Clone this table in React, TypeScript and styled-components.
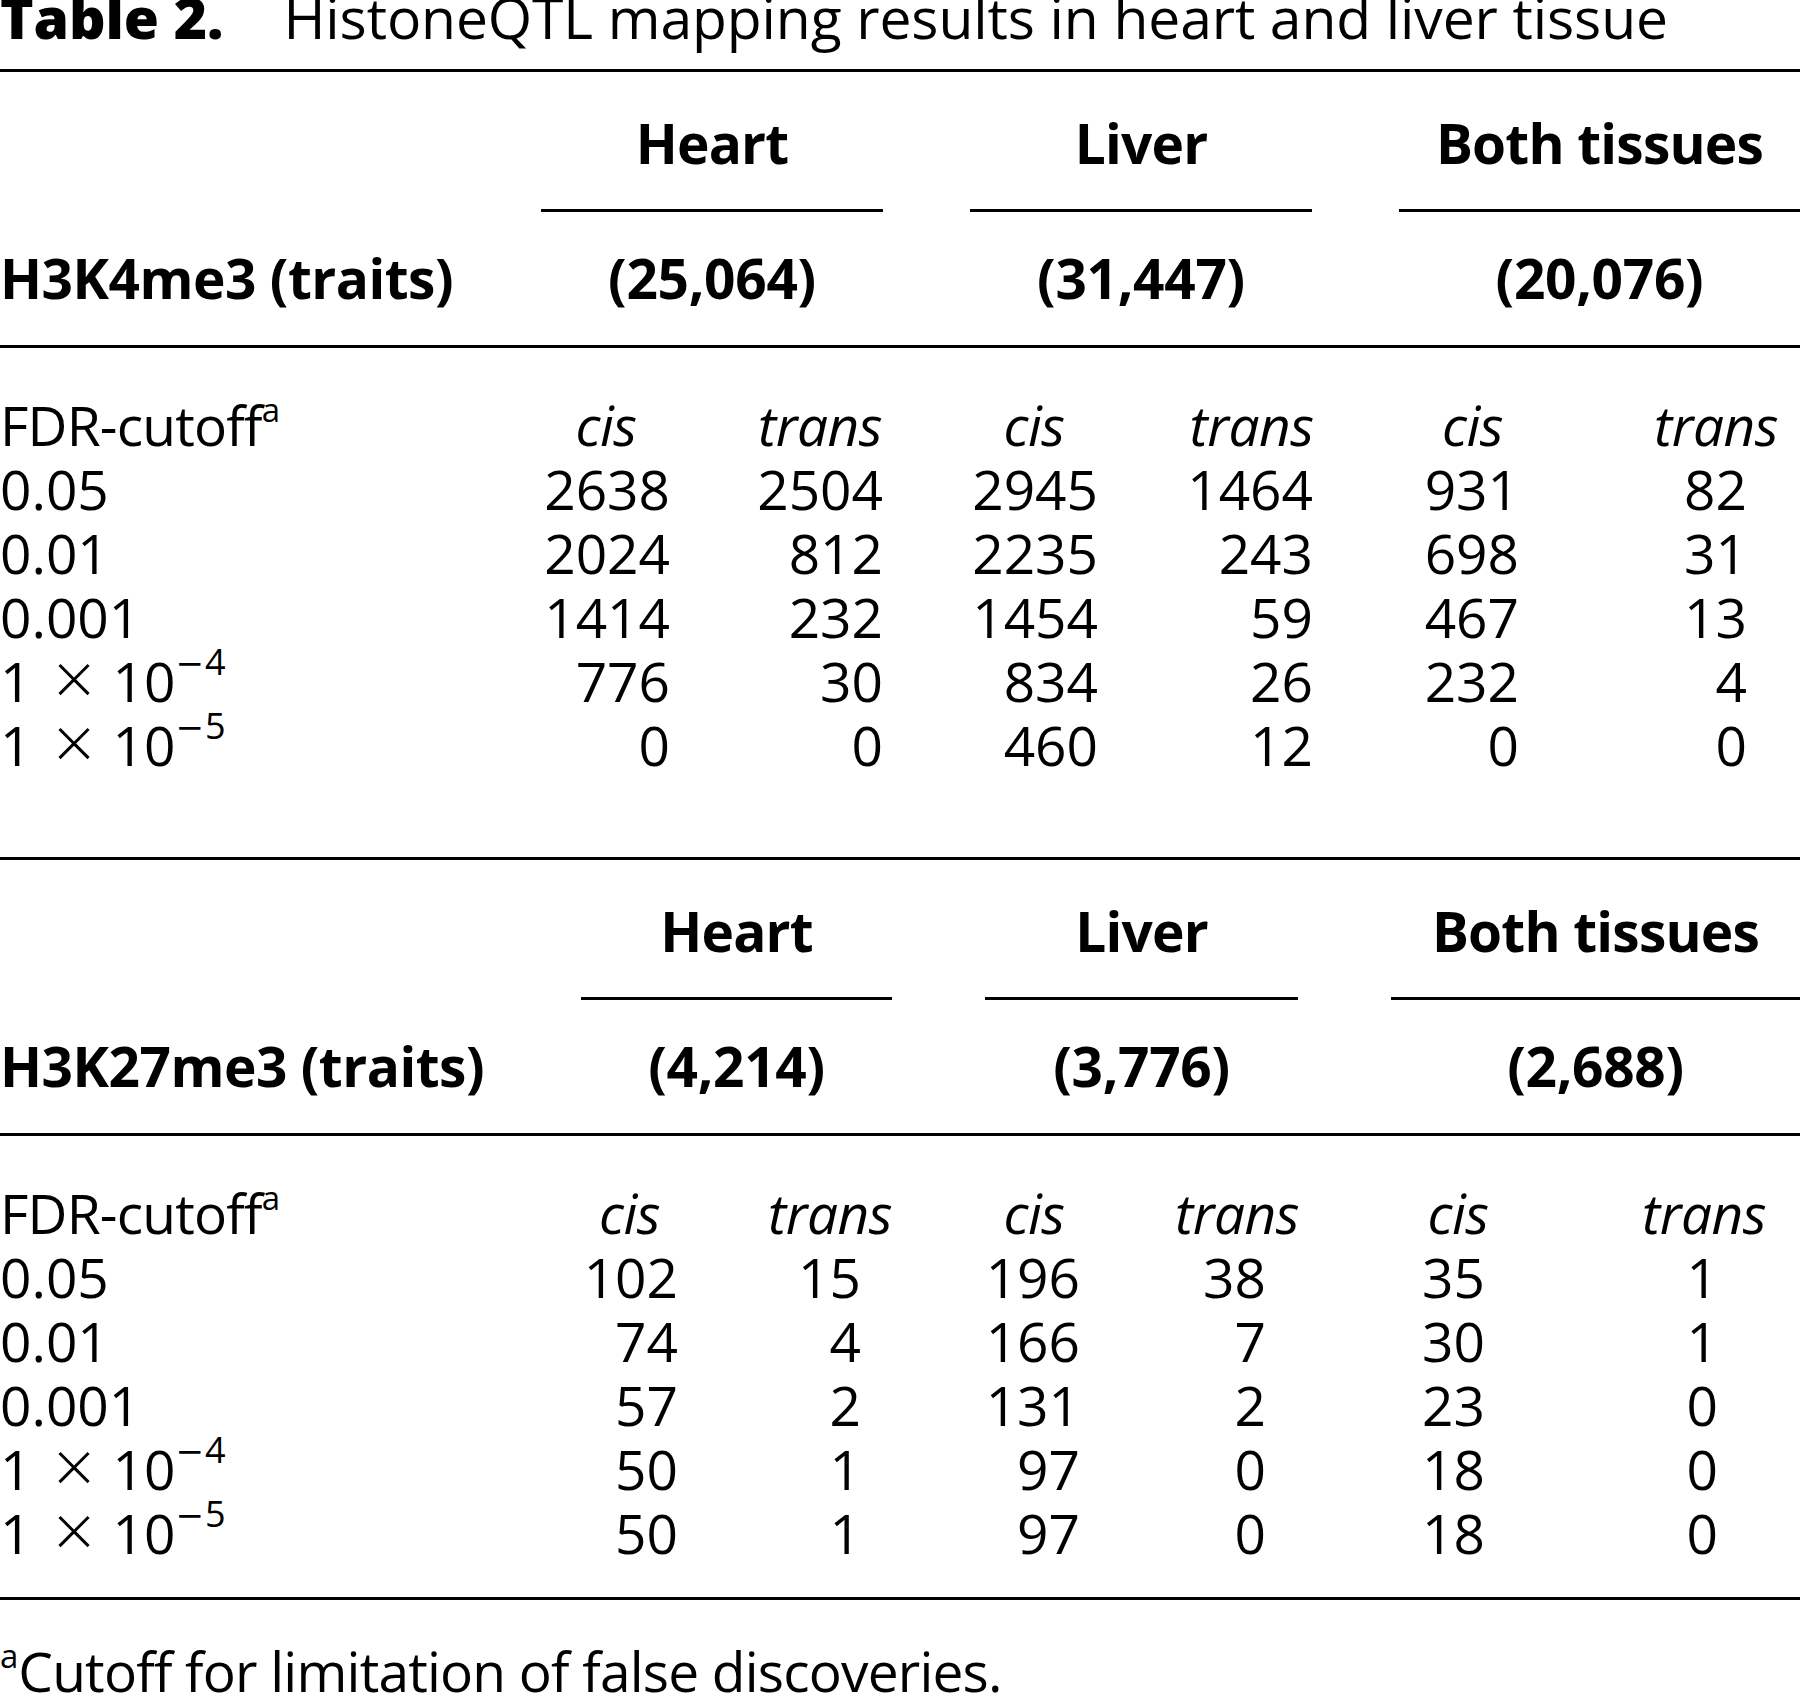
import React from 'react';
import styled, { createGlobalStyle } from 'styled-components';

const Global = createGlobalStyle`
  html, body { margin: 0; padding: 0; background: #ffffff; }
  body {
    font-family: "Open Sans", "Noto Sans", "Liberation Sans", sans-serif;
    color: #000000;
  }
`;

type Range = [number, number];

interface SpanSpec {
  title: string;
  count: string;
  range: Range;
}

interface RowSpec {
  cutoff: string;
  exp?: string;
  values: number[];
}

interface BlockSpec {
  label: string;
  spans: SpanSpec[];
  boxes: Range[];
  rows: RowSpec[];
  tail: number;
}

const RIGHT_NUDGE = 2;

const blocks: BlockSpec[] = [
  {
    label: 'H3K4me3 (traits)',
    spans: [
      { title: 'Heart', count: '(25,064)', range: [541, 883] },
      { title: 'Liver', count: '(31,447)', range: [970, 1312] },
      { title: 'Both tissues', count: '(20,076)', range: [1399, 1800] },
    ],
    boxes: [
      [542, 668],
      [757, 881],
      [970, 1096],
      [1190, 1311],
      [1426, 1517],
      [1685, 1745],
    ],
    rows: [
      { cutoff: '0.05', values: [2638, 2504, 2945, 1464, 931, 82] },
      { cutoff: '0.01', values: [2024, 812, 2235, 243, 698, 31] },
      { cutoff: '0.001', values: [1414, 232, 1454, 59, 467, 13] },
      { cutoff: '1', exp: '4', values: [776, 30, 834, 26, 232, 4] },
      { cutoff: '1', exp: '5', values: [0, 0, 460, 12, 0, 0] },
    ],
    tail: 80,
  },
  {
    label: 'H3K27me3 (traits)',
    spans: [
      { title: 'Heart', count: '(4,214)', range: [581, 892] },
      { title: 'Liver', count: '(3,776)', range: [985, 1298] },
      { title: 'Both tissues', count: '(2,688)', range: [1391, 1800] },
    ],
    boxes: [
      [581, 676],
      [799, 859],
      [988, 1078],
      [1208, 1264],
      [1431, 1483],
      [1690, 1716],
    ],
    rows: [
      { cutoff: '0.05', values: [102, 15, 196, 38, 35, 1] },
      { cutoff: '0.01', values: [74, 4, 166, 7, 30, 1] },
      { cutoff: '0.001', values: [57, 2, 131, 2, 23, 0] },
      { cutoff: '1', exp: '4', values: [50, 1, 97, 0, 18, 0] },
      { cutoff: '1', exp: '5', values: [50, 1, 97, 0, 18, 0] },
    ],
    tail: 32,
  },
];

const spanTemplate = (spans: SpanSpec[]) => {
  const parts: string[] = [];
  let cursor = 0;
  spans.forEach((s) => {
    parts.push(`${s.range[0] - cursor}px`);
    parts.push(`${s.range[1] - s.range[0]}px`);
    cursor = s.range[1];
  });
  return parts.join(' ');
};

const dataTemplate = (boxes: Range[]) => {
  const parts: string[] = [];
  let cursor = 0;
  boxes.forEach((b) => {
    parts.push(`${b[0] - cursor}px`);
    parts.push(`${b[1] + RIGHT_NUDGE - b[0]}px`);
    cursor = b[1] + RIGHT_NUDGE;
  });
  parts.push('1fr');
  return parts.join(' ');
};

const Page = styled.div`
  width: 1800px;
  height: 1693px;
  overflow: hidden;
  font-size: 55px;
`;

const Title = styled.h1`
  margin: 0;
  height: 34px;
  font-size: 57px;
  font-weight: 400;
  line-height: 34px;
  white-space: nowrap;
  letter-spacing: -0.1px;
`;

const TitleLabel = styled.span`
  display: inline-block;
  font-weight: 800;
  margin-right: 60px;
`;

const Rule = styled.div<{ $top: number }>`
  height: 3px;
  margin-top: ${(p) => p.$top}px;
  background: #000000;
`;

const SpanGrid = styled.div<{ $template: string; $top: number }>`
  display: grid;
  grid-template-columns: ${(p) => p.$template};
  margin-top: ${(p) => p.$top}px;
  line-height: 64px;
  white-space: nowrap;
`;

const Spanner = styled.div<{ $col: number }>`
  grid-column: ${(p) => p.$col};
  display: flex;
  justify-content: center;
  font-weight: 700;
  letter-spacing: -0.8px;
  padding-bottom: 34px;
  border-bottom: 3px solid #000000;
`;

const TraitLabel = styled.div`
  grid-column: 1;
  font-weight: 700;
  letter-spacing: -0.5px;
`;

const Count = styled.div<{ $col: number }>`
  grid-column: ${(p) => p.$col};
  display: flex;
  justify-content: center;
  font-weight: 700;
  letter-spacing: -0.3px;
`;

const DataGrid = styled.div<{ $template: string; $top: number }>`
  display: grid;
  grid-template-columns: ${(p) => p.$template};
  grid-auto-rows: 64px;
  margin-top: ${(p) => p.$top}px;
  line-height: 64px;
  white-space: nowrap;
`;

const RowLabel = styled.div<{ $tight?: boolean }>`
  grid-column: 1;
  letter-spacing: ${(p) => (p.$tight ? '-0.8px' : '0')};
`;

const HeadCell = styled.div<{ $col: number }>`
  grid-column: ${(p) => p.$col};
  display: flex;
  justify-content: center;
  font-style: italic;
  letter-spacing: -0.5px;
`;

const NumCell = styled.div<{ $col: number }>`
  grid-column: ${(p) => p.$col};
  display: flex;
  justify-content: flex-end;
`;

const Sup = styled.sup<{ $size: number; $rise: number }>`
  font-size: ${(p) => p.$size}px;
  line-height: 0;
  letter-spacing: 0;
  vertical-align: ${(p) => p.$rise}px;
`;

const Times = styled.span`
  display: inline-block;
  margin: 0 18px 0 22px;
  font-size: 72px;
  font-weight: 300;
  line-height: 0;
  vertical-align: -3px;
`;

const Minus = styled.span`
  font-family: "DejaVu Sans", "Open Sans", sans-serif;
  font-size: 34px;
  margin-right: 1px;
`;

const Footnote = styled.p`
  margin: 39px 0 0;
  line-height: 64px;
  white-space: nowrap;
  letter-spacing: -0.8px;
`;

const SUB_HEADS = ['cis', 'trans', 'cis', 'trans', 'cis', 'trans'];

function Cutoff({ row }: { row: RowSpec }) {
  if (!row.exp) return <RowLabel>{row.cutoff}</RowLabel>;
  return (
    <RowLabel>
      {row.cutoff}
      <Times>×</Times>
      10
      <Sup $size={36} $rise={27}>
        <Minus>−</Minus>
        {row.exp}
      </Sup>
    </RowLabel>
  );
}

function Block({ spec, top }: { spec: BlockSpec; top: number }) {
  const sTemplate = spanTemplate(spec.spans);
  const dTemplate = dataTemplate(spec.boxes);
  return (
    <>
      <SpanGrid $template={sTemplate} $top={top}>
        {spec.spans.map((s, i) => (
          <Spanner key={s.title} $col={2 + i * 2}>
            {s.title}
          </Spanner>
        ))}
      </SpanGrid>
      <SpanGrid $template={sTemplate} $top={34}>
        <TraitLabel>{spec.label}</TraitLabel>
        {spec.spans.map((s, i) => (
          <Count key={s.title} $col={2 + i * 2}>
            {s.count}
          </Count>
        ))}
      </SpanGrid>
      <Rule $top={35} />
      <DataGrid $template={dTemplate} $top={45}>
        <RowLabel $tight>
          FDR-cutoff
          <Sup $size={33} $rise={24}>a</Sup>
        </RowLabel>
        {SUB_HEADS.map((h, i) => (
          <HeadCell key={i} $col={2 + i * 2}>
            {h}
          </HeadCell>
        ))}
        {spec.rows.map((r, ri) => (
          <React.Fragment key={ri}>
            <Cutoff row={r} />
            {r.values.map((v, i) => (
              <NumCell key={i} $col={2 + i * 2}>
                {v}
              </NumCell>
            ))}
          </React.Fragment>
        ))}
      </DataGrid>
      <Rule $top={spec.tail} />
    </>
  );
}

export default function App() {
  return (
    <Page>
      <Global />
      <Title>
        <TitleLabel>Table 2.</TitleLabel>
        HistoneQTL mapping results in heart and liver tissue
      </Title>
      <Rule $top={35} />
      <Block spec={blocks[0]} top={39} />
      <Block spec={blocks[1]} top={39} />
      <Footnote>
        <Sup $size={33} $rise={24}>a</Sup>
        Cutoff for limitation of false discoveries.
      </Footnote>
    </Page>
  );
}
